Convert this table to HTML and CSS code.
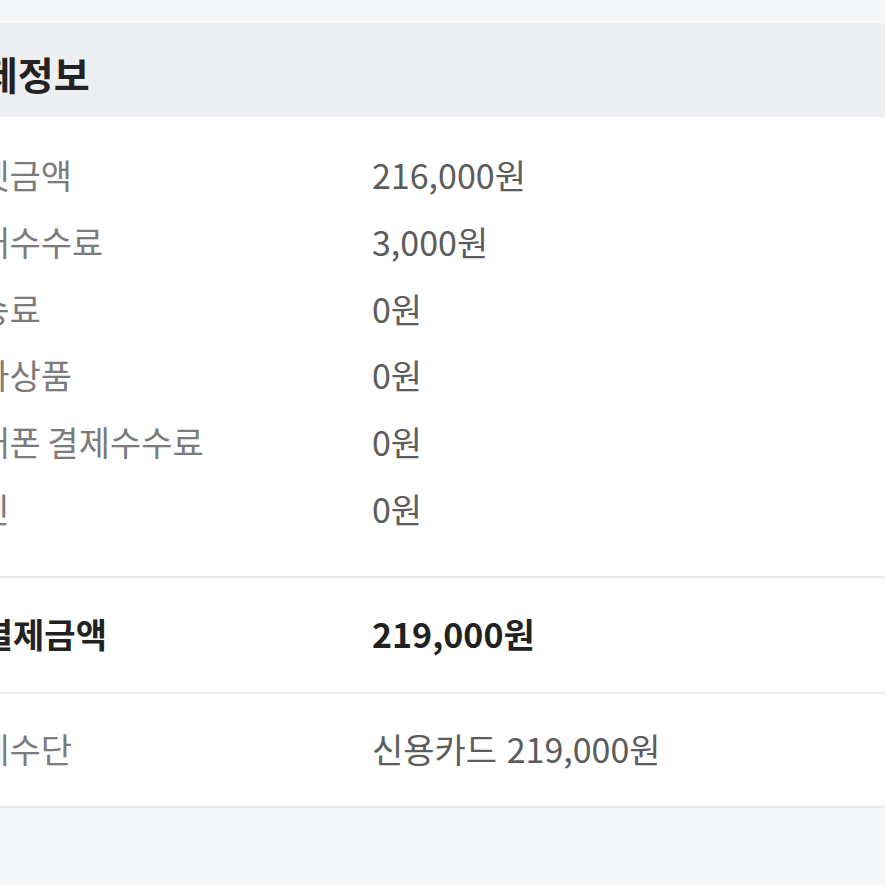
FILE: index.html
```html
<!DOCTYPE html>
<html lang="ko">
<head>
<meta charset="utf-8">
<title>결제정보</title>
<link rel="stylesheet" href="styles.css">
</head>
<body>
<div class="page">
  <div class="top-strip"></div>
  <div class="section-head">
    <h2 class="head-title">결제정보</h2>
  </div>
  <div class="detail">
    <div class="row"><span class="label">티켓금액</span><span class="value">216,000원</span></div>
    <div class="row"><span class="label">예매수수료</span><span class="value">3,000원</span></div>
    <div class="row"><span class="label">배송료</span><span class="value">0원</span></div>
    <div class="row"><span class="label">부가상품</span><span class="value">0원</span></div>
    <div class="row"><span class="label">휴대폰 결제수수료</span><span class="value">0원</span></div>
    <div class="row"><span class="label">할인</span><span class="value">0원</span></div>
  </div>
  <div class="total">
    <div class="row"><span class="label">총 결제금액</span><span class="value">219,000원</span></div>
  </div>
  <div class="method">
    <div class="row"><span class="label">결제수단</span><span class="value">신용카드 219,000원</span></div>
  </div>
  <div class="bottom-fill"></div>
</div>
</body>
</html>
```

FILE: styles.css
```css
html, body {
  margin: 0;
  padding: 0;
  background: #f5f6f8;
}
body {
  font-family: "Noto Sans CJK KR", "Noto Sans", sans-serif;
  overflow: hidden;
}
.page {
  width: 885px;
  height: 885px;
  overflow: hidden;
  display: flex;
  flex-direction: column;
}
.top-strip {
  height: 21px;
  background: #f6f7f9;
  border-bottom: 2px solid #fbfbfc;
}
.section-head {
  height: 94px;
  background: #eeeff2;
  display: flex;
  align-items: center;
  padding-top: 6px;
  box-sizing: border-box;
}
.head-title {
  margin: 0 0 0 -54px;
  font-size: 39px;
  font-weight: 700;
  color: #222;
  line-height: 1;
}
.detail {
  background: #fff;
  padding: 25px 0 33px;
  border-bottom: 2px solid #ebebeb;
}
.row {
  display: grid;
  grid-template-columns: 425px 1fr;
  align-items: center;
  height: 66.8px;
  margin-left: -53px;
  font-size: 34px;
  line-height: 1.2;
}
.label {
  color: #7b7b7b;
  word-spacing: -3px;
}
.value {
  color: #5c5c5c;
}
.total {
  background: #fff;
  height: 114px;
  display: flex;
  flex-direction: column;
  justify-content: center;
  border-bottom: 2px solid #ebebeb;
}
.total .label,
.total .value {
  color: #222;
  font-weight: 700;
}
.total .label {
  margin-left: -3px;
}
.method {
  background: #fff;
  height: 112px;
  display: flex;
  flex-direction: column;
  justify-content: center;
  border-bottom: 2px solid #ebebeb;
}
.bottom-fill {
  flex: 1;
  background: #f5f6f8;
}
```
